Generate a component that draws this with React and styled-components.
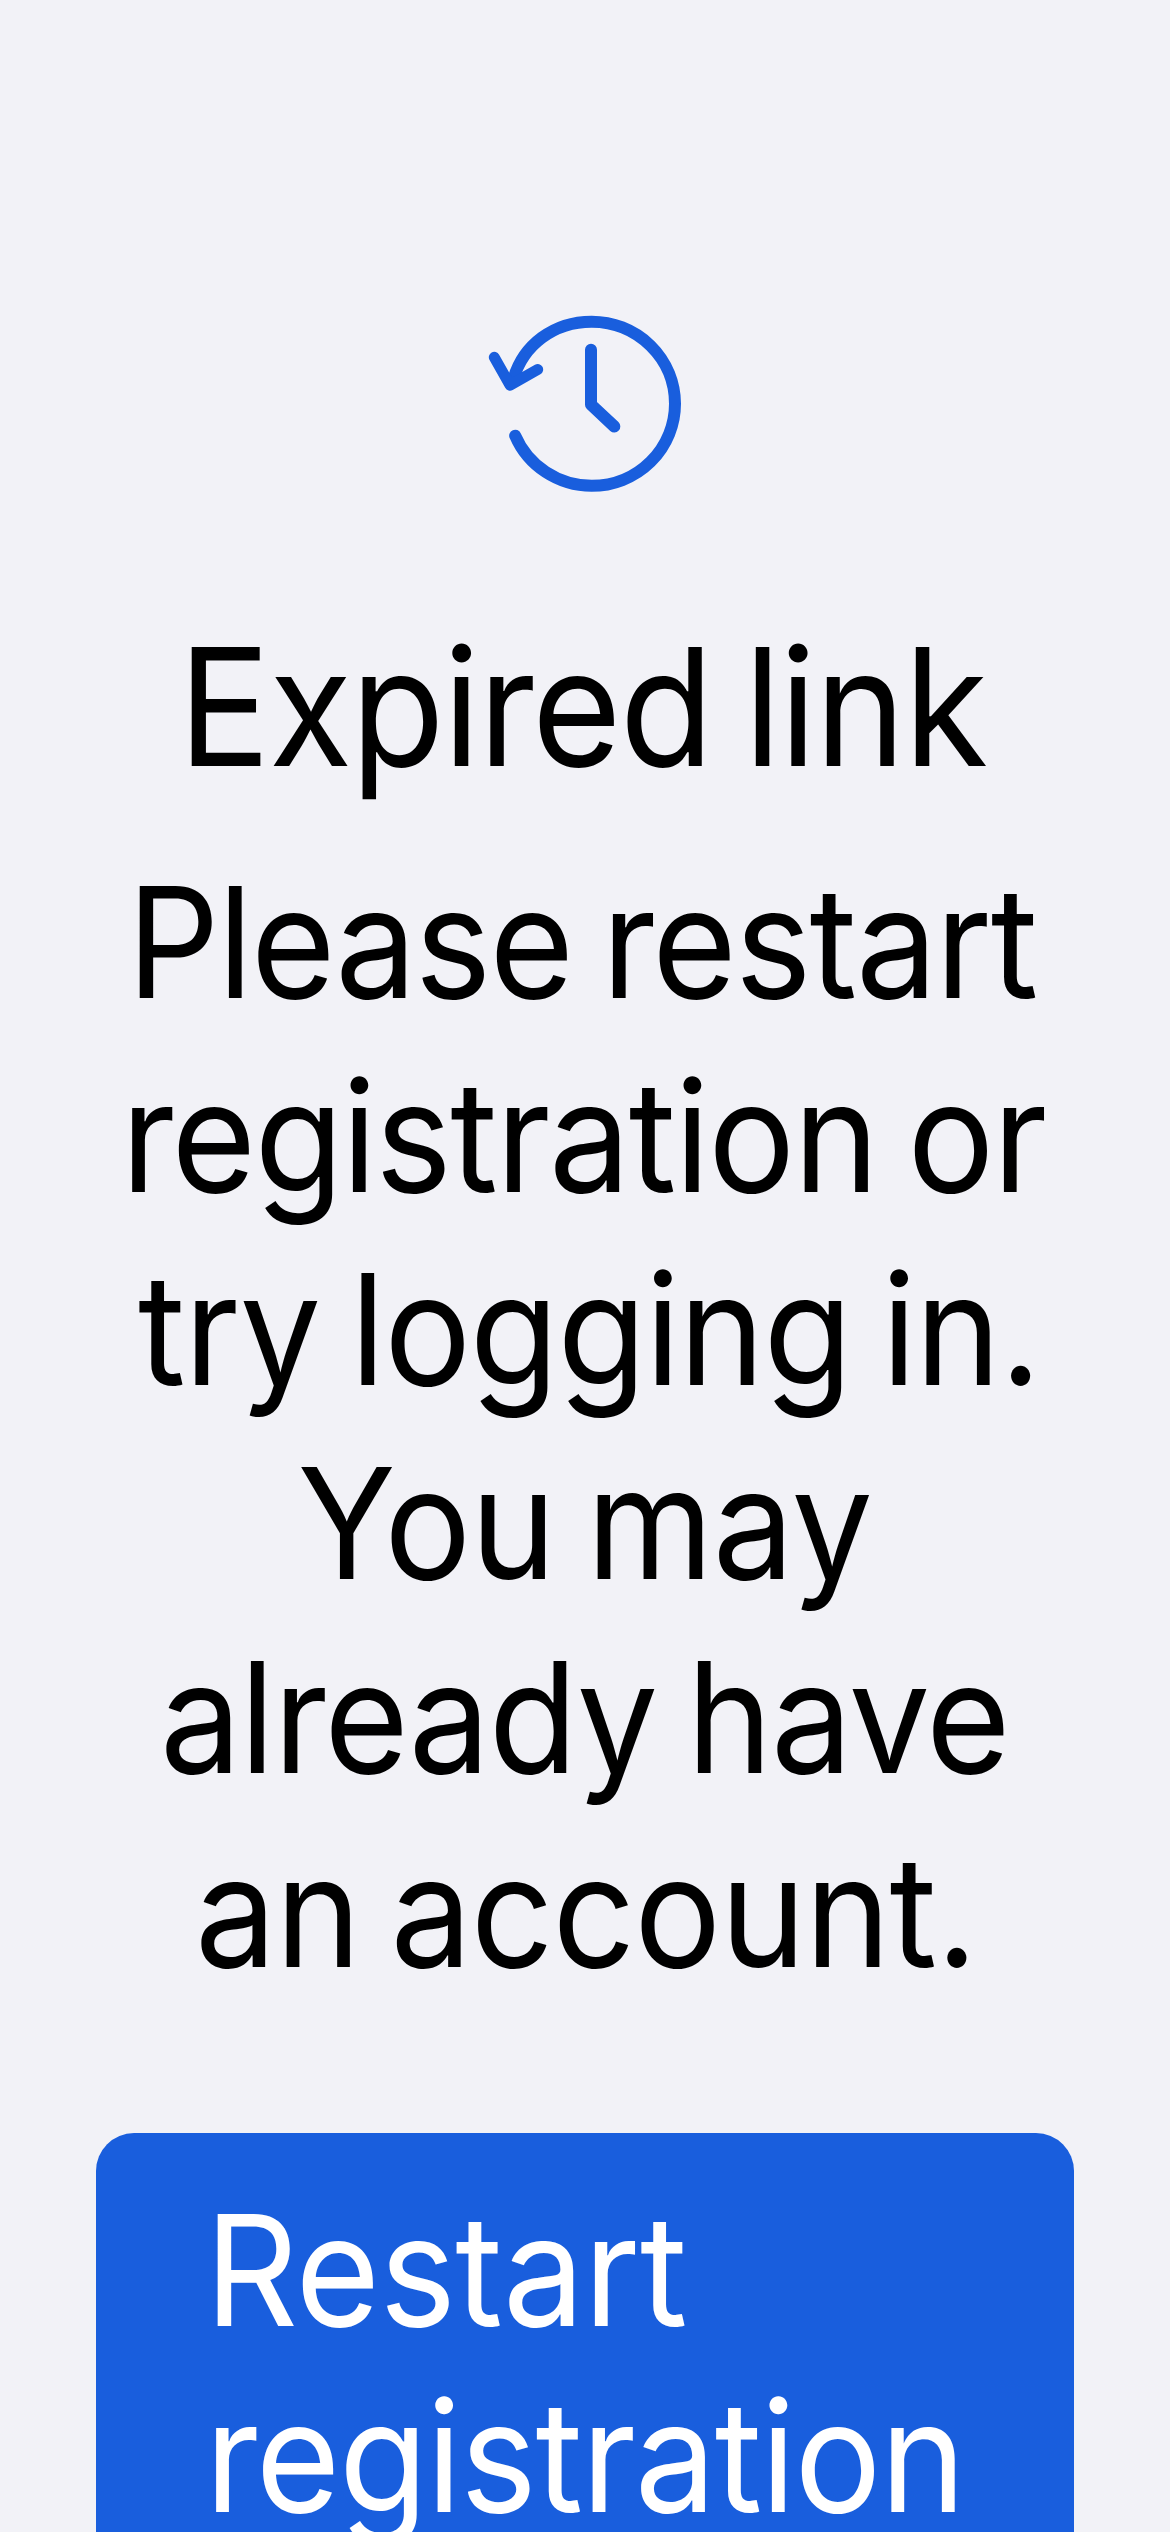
import React from "react";
import styled, { createGlobalStyle } from "styled-components";

const GlobalStyle = createGlobalStyle`
  *, *::before, *::after { box-sizing: border-box; }
  body {
    margin: 0;
    background: #f2f2f7;
    font-family: Inter, "Liberation Sans", sans-serif;
  }
`;

const Screen = styled.main`
  display: flex;
  flex-direction: column;
  align-items: center;
  height: 2532px;
  padding: 290px 96px 0;
  overflow: hidden;
  background: #f2f2f7;
  color: #000;
`;

const ExpiredIcon = styled.svg`
  flex: none;
  width: 230px;
  height: 220px;
  fill: none;
  stroke: #195edd;
  stroke-linecap: round;
  stroke-linejoin: round;
`;

const Title = styled.h1`
  flex: none;
  margin: 97px 0 0;
  font-size: 163px;
  font-weight: 400;
  line-height: 200px;
  text-align: center;
`;

const Message = styled.p`
  flex: none;
  margin: 39px 0 0;
  font-size: 154px;
  line-height: 193.7px;
  text-align: center;
`;

const Line = styled.span`
  display: block;
  white-space: nowrap;
  letter-spacing: ${(p) => p.$tracking || 0}px;
  word-spacing: -10px;
  transform: translateX(${(p) => p.$shift || 0}px) scaleX(0.94);
  transform-origin: ${(p) => p.$origin || "center"};
`;

const RestartButton = styled.button`
  flex: none;
  align-self: stretch;
  margin: 125px 0 0;
  padding: 44px 109px;
  border: 0;
  border-radius: 38px;
  background: #195edd;
  color: #fff;
  font-family: inherit;
  font-size: 154px;
  line-height: 186px;
  text-align: left;
`;

export default function App() {
  return (
    <>
      <GlobalStyle />
      <Screen>
        <ExpiredIcon viewBox="0 0 690 660" aria-hidden="true">
          <path
            strokeWidth="36"
            d="M135.500 437 A250 246 0 0 0 365 587.500 A250 246.500 0 0 0 615 341 A250 246.500 0 0 0 365 95 C251 95 159 165 130 268"
          />
          <path strokeWidth="33" d="M73 202 L120 285.500 L203 238.500" />
          <path strokeWidth="36" d="M363 179 V344 L433 409.500" />
        </ExpiredIcon>
        <Title>
          <Line $tracking={-1.71} $shift={-2.5}>Expired link</Line>
        </Title>
        <Message>
          <Line $tracking={-1.8} $shift={-3.3}>Please restart</Line>
          <Line $tracking={-1.59} $shift={-1.6}>registration or</Line>
          <Line $tracking={-1.19} $shift={4.2}>try logging in.</Line>
          <Line $tracking={-0.53}>You may</Line>
          <Line $tracking={-1.42} $shift={-0.4}>already have</Line>
          <Line $tracking={-0.97} $shift={1}>an account.</Line>
        </Message>
        <RestartButton type="button">
          <Line $origin="left" $tracking={-0.53}>Restart</Line>
          <Line $origin="left" $tracking={-1.35}>registration</Line>
        </RestartButton>
      </Screen>
    </>
  );
}
